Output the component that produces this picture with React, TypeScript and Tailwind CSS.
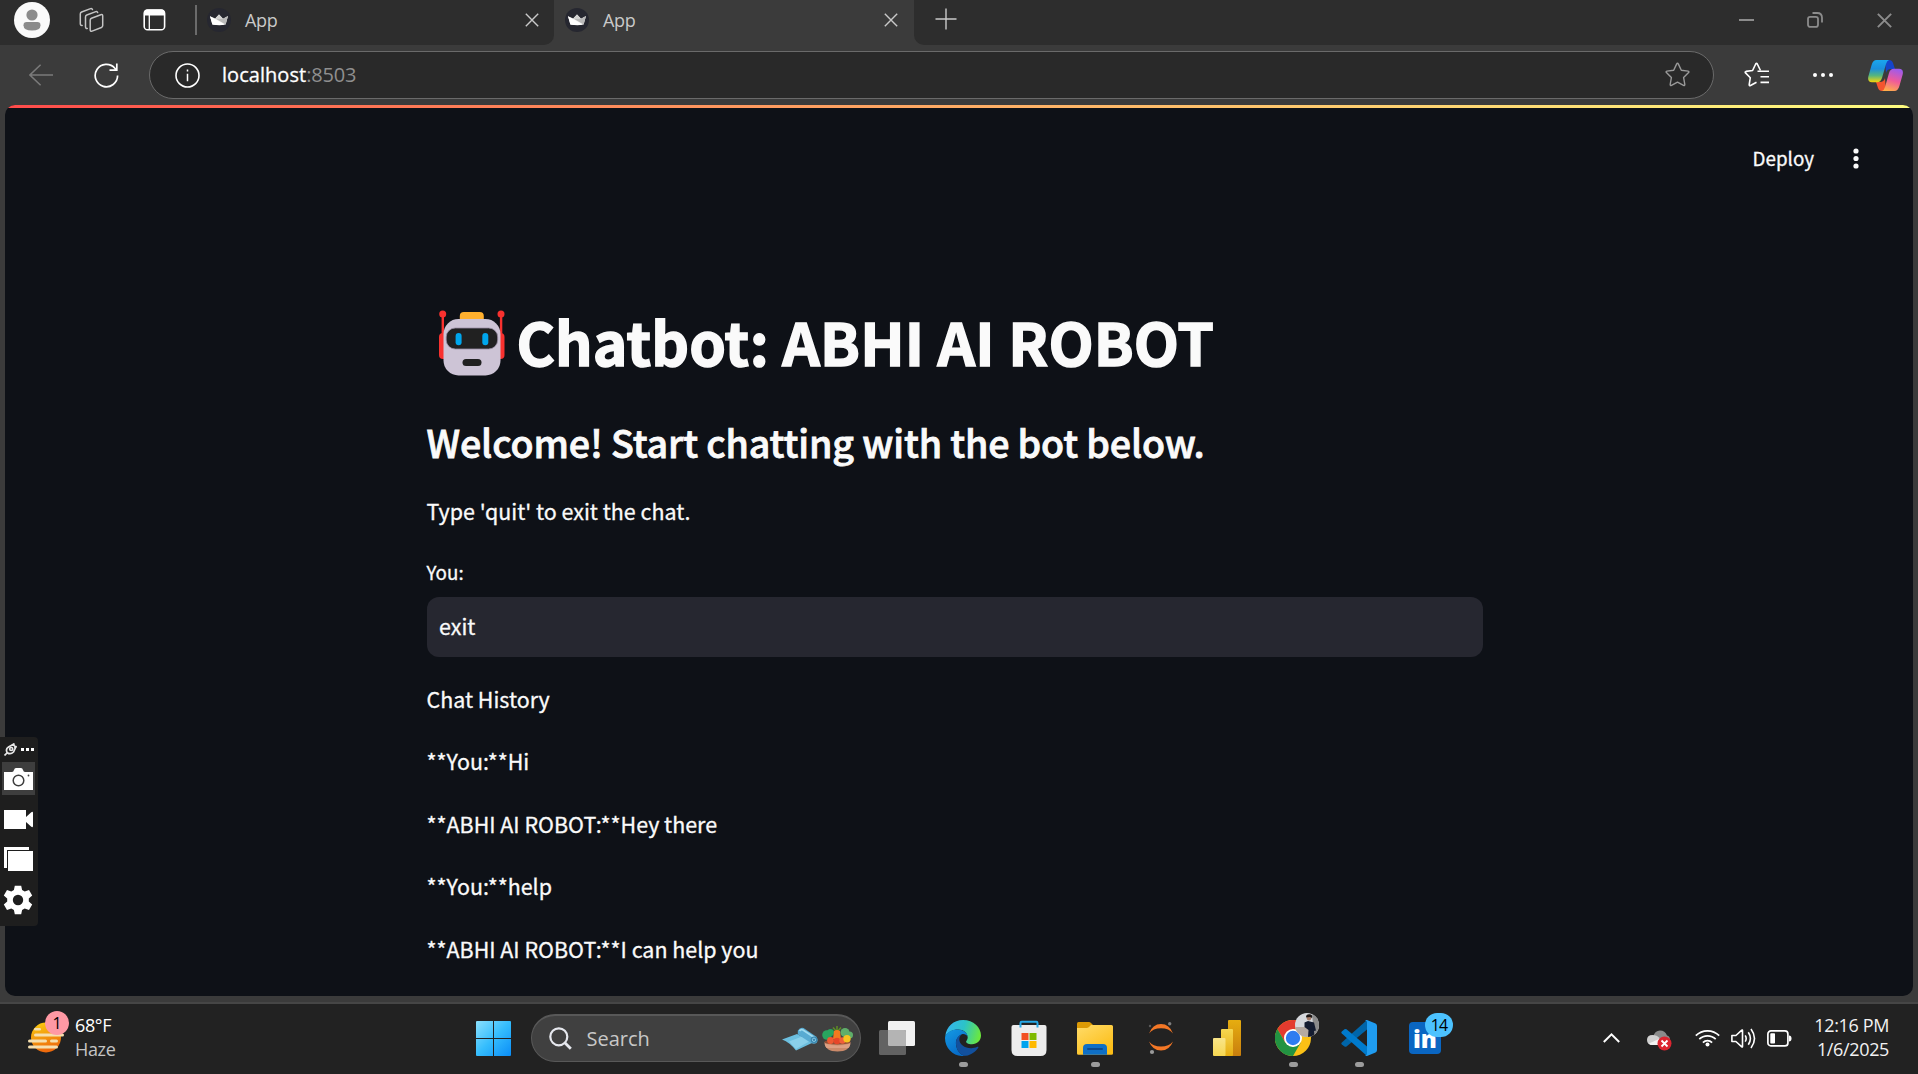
import React from "react";

const source = "font-['Noto_Sans_CJK_SC',sans-serif]";

function Crown() {
  return (
    <svg className="size-6 shrink-0" viewBox="0 0 24 24">
      <circle cx="12" cy="12" r="12" fill="#262730" />
      <path d="M3 8.2 L8.2 10.6 L12 6.6 L16 10.8 L21 8 L18.6 16.6 Q12 17.6 5.4 16.6 Z" fill="#f4f4f4" />
      <path d="M12 6.6 L16 10.8 L8.2 10.6 Z" fill="#d2d2d2" />
      <path d="M8.2 10.6 L16 10.8 L21 8 L18.6 16.6 Z" fill="#b9b9b9" />
      <path d="M3 8.2 L17.6 16.8 Q12 17.6 5.4 16.6 Z" fill="#fff" />
    </svg>
  );
}

function Cross({ className }: { className: string }) {
  return (
    <svg className={className} viewBox="0 0 14 14" fill="none" stroke="currentColor" strokeWidth="1.4">
      <path d="M.8.8 13.2 13.2M13.2.8.8 13.2" />
    </svg>
  );
}

function TabStrip() {
  return (
    <div className="flex h-[45px] bg-[#3b3b3b] text-lg leading-6 text-[#c9c9c9]">
      <div className="flex w-[554px] items-start rounded-br-[10px] bg-[#2d2d2d]">
        <svg className="mt-0.5 ml-3.5 size-9" viewBox="0 0 36 36">
          <circle cx="18" cy="18" r="18" fill="#fafafa" />
          <circle cx="18" cy="13" r="5.6" fill="#8b8b8b" />
          <path d="M9.5 23.2q0-3.2 3.2-3.2h10.6q3.2 0 3.2 3.2 0 5.3-8.5 5.3t-8.5-5.3Z" fill="#8b8b8b" />
        </svg>
        <svg className="mt-[7px] ml-[28px] h-[26px] w-[27px]" viewBox="0 0 27 26" fill="none" stroke="#c4c4c4" strokeWidth="1.5" strokeLinejoin="round">
          <path d="M12.2 13.2q0-1.4 1.3-2l9.3-3.5q1.9-.6 1.9 1.3v9.6q0 1.3-1.3 1.9l-9.3 3.6q-1.9.6-1.9-1.3Z" />
          <path d="M9.3 21.4q-1.8.2-1.8-1.6V10q0-1.4 1.3-2l9-3.4q1.5-.4 1.9 1" strokeLinecap="round" />
          <path d="M4.2 18.4q-1.9.2-1.9-1.6V7q0-1.4 1.3-2l9-3.4q1.5-.4 1.9 1" strokeLinecap="round" />
        </svg>
        <svg className="mt-[9px] ml-[38px] h-[22px] w-[23px]" viewBox="0 0 23 22">
          <rect x="1.2" y="1" width="20.4" height="19.8" rx="3.4" fill="none" stroke="#fff" strokeWidth="1.6" />
          <path d="M1 6.5V4q0-3.4 3.4-3.4h14Q21.8.6 21.800 4v2.5Z" fill="#fff" />
          <path d="M6.300 6v14.5" stroke="#fff" strokeWidth="1.300" />
        </svg>
        <div className="mt-[5px] ml-[29px] h-[30px] w-0.5 bg-[#6b6b6b]" />
        <div className="mt-2 ml-[10px] flex w-[332px] items-center">
          <Crown />
          <span className="-mt-px ml-3.5 flex-1 tracking-[-0.02em]">App</span>
          <Cross className="size-3.5" />
        </div>
      </div>
      <div className="flex w-[360px] items-start pt-2">
        <div className="ml-[11px] flex w-[333px] items-center">
          <Crown />
          <span className="-mt-px ml-3.5 flex-1 tracking-[-0.02em]">App</span>
          <Cross className="size-3.5" />
        </div>
      </div>
      <div className="flex flex-1 items-start rounded-bl-[10px] bg-[#2d2d2d] text-[#8c8c8c]">
        <svg className="mt-2 ml-[21px] size-[22px]" viewBox="0 0 22 22" stroke="#c9c9c9" strokeWidth="1.4">
          <path d="M11 .5v21M.5 11h21" />
        </svg>
        <div className="ml-auto flex w-[179px] items-center pt-3">
          <div className="h-0.5 w-[15px] bg-[#8c8c8c]" />
          <svg className="ml-[53px] size-4" viewBox="0 0 16 16" fill="none" stroke="currentColor" strokeWidth="1.8">
            <rect x="1" y="4.900" width="10" height="10" rx="2.200" />
            <path d="M5.500 1h4.700Q15 1 15 5.800V10.500" />
          </svg>
          <Cross className="ml-[54px] size-[15px] stroke-[1.8]" />
        </div>
      </div>
    </div>
  );
}

function Toolbar() {
  return (
    <div className="flex h-[60px] items-center bg-[#3b3b3b]">
      <svg className="ml-[29px] h-[22px] w-6" viewBox="0 0 24 22" fill="none" stroke="#7b7b7b" strokeWidth="1.5">
        <path d="M24 11H.8M11.600.8.9 11l10.700 10.200" />
      </svg>
      <svg className="ml-[41px] size-[25px]" viewBox="0 0 25 25" fill="none" stroke="#fff" strokeWidth="1.700">
        <path d="M23.600 12.500A11.200 11.200 0 1 1 20.900 5.300L22.500 7M22.800.6V7.100H15.500" />
      </svg>
      <div className="ml-[30px] flex h-12 w-[1565px] items-center rounded-full border-[1.5px] border-[#6a6a6a] bg-[#292929] text-xl">
        <svg className="ml-[25px] size-[25px]" viewBox="0 0 25 25" fill="none" stroke="#fff" strokeWidth="1.600">
          <circle cx="12.500" cy="12.500" r="11.500" />
          <path d="M12.500 10.800v7.400M12.500 6.600v2" strokeWidth="1.500" />
        </svg>
        <span className="ml-[22px] tracking-[0.002em] text-white [-webkit-text-stroke:0.3px_#fff]">localhost</span>
        <span className="tracking-[-0.01em] text-[#8f8f8f]">:8503</span>
        <svg className="mr-[23px] mb-px ml-auto size-[25px]" viewBox="0 0 25 25" fill="none" stroke="#9a9a9a" strokeWidth="1.400" strokeLinejoin="round">
          <path d="M12.500 1.200q.5 0 .8.700l3 6.300 6.800.9q1.400.4.500 1.500l-5 4.900 1.200 6.900q.1 1.400-1.300.900l-6-3.200-6 3.200q-1.400.5-1.300-.9l1.200-6.900-5-4.900q-.9-1.100.5-1.500l6.800-.9 3-6.300q.3-.7.800-.7Z" />
        </svg>
      </div>
      <svg className="ml-[30px] size-[26px]" viewBox="0 0 26 26" fill="none" stroke="#fff" strokeWidth="1.600" strokeLinejoin="round">
        <path d="M16.500 8.500 13.300 2q-.8-1.300-1.600 0L8.600 8.500l-6.600.9q-1.400.4-.5 1.500l4.800 4.800-1.100 6.900q-.1 1.400 1.300.9l6-3.200" />
        <path d="M13.500 9.200H25M16.500 14.800H25M16.500 20.400H25" />
      </svg>
      <svg className="ml-[42px] h-2 w-[22px]" viewBox="0 0 22 8" fill="#fff">
        <circle cx="3" cy="4" r="2" />
        <circle cx="11" cy="4" r="2" />
        <circle cx="19" cy="4" r="2" />
      </svg>
      <svg className="ml-[34px] h-[31px] w-[35px]" viewBox="0 0 35 31">
        <defs>
          <linearGradient id="cpA" x1="0" y1="0" x2="0" y2="1">
            <stop offset="0" stopColor="#1aa7ee" />
            <stop offset=".4" stopColor="#1b8fdd" />
            <stop offset=".7" stopColor="#55b57f" />
            <stop offset="1" stopColor="#f5d60a" />
          </linearGradient>
          <linearGradient id="cpB" x1="0.600" y1="0" x2="0.300" y2="1">
            <stop offset="0" stopColor="#a05bea" />
            <stop offset=".5" stopColor="#ef5a9b" />
            <stop offset="1" stopColor="#ffae4a" />
          </linearGradient>
        </defs>
        <path d="M17 0h4q3 0 4 3l2 6h-4q-4 0-5 4Z" fill="#1544c9" />
        <path d="M18 31h-4q-3 0-4-3l-2-6h4q4 0 5-4Z" fill="#f4552f" />
        <path d="M8.500 0H21q-2 .6-3 4l-4 14q-1.300 4.200-5 4.200H4q-5 0-3.600-6L3.600 5Q5 0 8.500 0Z" fill="url(#cpA)" />
        <path d="M26.500 31H14q2-.6 3-4l4-14q1.300-4.200 5-4.200h5q5 0 3.600 6L31.400 26Q30 31 26.500 31Z" fill="url(#cpB)" />
      </svg>
    </div>
  );
}

function Robot() {
  return (
    <svg className="mt-1 ml-3 size-[66px] shrink-0" viewBox="0 0 66 66">
      <g fill="#F8312F">
        <circle cx="3.700" cy="3.900" r="3.500" />
        <circle cx="62" cy="3.900" r="3.500" />
        <rect x="2.600" y="4" width="2.400" height="24" />
        <rect x="60.900" y="4" width="2.400" height="24" />
        <rect x="0" y="23" width="12" height="26" rx="4" />
        <rect x="53.500" y="23" width="12" height="26" rx="4" />
      </g>
      <rect x="20.800" y="2" width="24" height="12" rx="4" fill="#FFB02E" />
      <rect x="4.500" y="9" width="57" height="56.500" rx="15" fill="#CDC4D6" />
      <rect x="7.200" y="18" width="51.500" height="21" rx="9" fill="#212121" stroke="#998EA4" strokeWidth=".8" />
      <rect x="16.600" y="23" width="6" height="12.300" rx="3" fill="#00A6ED" />
      <rect x="43.300" y="23" width="6" height="12.300" rx="3" fill="#00A6ED" />
      <rect x="23.500" y="49" width="19" height="7" rx="3.500" fill="#212121" />
    </svg>
  );
}

const messages = ["Chat History", "**You:**Hi", "**ABHI AI ROBOT:**Hey there", "**You:**help", "**ABHI AI ROBOT:**I can help you"];

function Page() {
  return (
    <main className={`mx-[5px] flex h-[891px] flex-col overflow-hidden rounded-[10px] bg-[#0e1117] text-[#fafafa] ${source}`}>
      <div className="h-[3px] shrink-0 bg-linear-to-r from-[#ff4b4b] to-[#fffd80]" />
      <header className="flex h-[101px] shrink-0 items-center justify-end pr-[54px]">
        <span className="-mt-0.5 text-[18.8px] leading-7 [-webkit-text-stroke:0.3px_#fafafa]">Deploy</span>
        <svg className="ml-[39px] h-[21px] w-1.5" viewBox="0 0 6 21" fill="currentColor">
          <circle cx="3" cy="3" r="2.600" />
          <circle cx="3" cy="10.500" r="2.600" />
          <circle cx="3" cy="18" r="2.600" />
        </svg>
      </header>
      <div className="ml-[421.5px] flex w-[1056px] flex-col pt-[97px] text-[21.45px] leading-[38.5px] [-webkit-text-stroke:0.3px_#fafafa]">
        <h1 className="flex h-[70px] items-start text-[58.7px] leading-[70px] font-bold tracking-[0.12px] [-webkit-text-stroke:1.5px_#fafafa]">
          <Robot />
          <span className="ml-3 whitespace-nowrap">Chatbot: ABHI AI ROBOT</span>
        </h1>
        <h2 className="mt-[38px] text-[37.6px] leading-[56px] font-medium tracking-[-0.0035em] whitespace-nowrap [-webkit-text-stroke:0.8px_#fafafa]">
          Welcome! Start chatting with the bot below.
        </h2>
        <p className="mt-[22px]">Type 'quit' to exit the chat.</p>
        <label className="mt-[26.5px] text-[18.8px] leading-[30px]">You:</label>
        <div className="mt-[9.5px] h-[60px] rounded-xl bg-[#262730] pl-[12.5px] leading-[58px]">exit</div>
        <div className="mt-[23px] flex flex-col gap-6">
          {messages.map((m) => (
            <p key={m}>{m}</p>
          ))}
        </div>
      </div>
    </main>
  );
}

function CaptureWidget() {
  return (
    <aside className="absolute top-[737px] left-0 flex h-[189px] w-[38px] flex-col rounded-r bg-[#1e1e1e] pl-0.5">
      <div className="flex h-[25px] items-center gap-1 pl-0.5">
        <svg className="size-[13px]" viewBox="0 0 13 13" fill="none" stroke="#e8e8e8" strokeWidth="1.700">
          <path d="M.5 12.500 3.500 9.500" />
          <path d="M3.200 9.700Q1.200 6 4.500 4L9 1.500l2.700 2.700L9.500 9Q6.500 12 3.200 9.700Z" />
          <circle cx="7.200" cy="6" r="1.500" />
          <path d="m8 2.500 2.500-2M10.500 5l2-2" />
        </svg>
        <svg className="h-[3px] w-[13px]" viewBox="0 0 13 3" fill="#fff">
          <path d="M0 0h3v3H0zM5 0h3v3H5zM10 0h3v3h-3z" />
        </svg>
      </div>
      <div className="flex h-[33px] w-[33px] items-center justify-center bg-[#3e3e3e]">
        <svg className="h-[22px] w-[29px]" viewBox="0 0 29 22">
          <path d="M0 4h8q1.500 0 2-2t2-2h5q1.500 0 2 2t2 2h8v18H0z" fill="#fff" />
          <circle cx="14.500" cy="12.500" r="5.300" fill="none" stroke="#3e3e3e" strokeWidth="1.500" />
          <circle cx="24.500" cy="7.500" r=".9" fill="#3e3e3e" />
        </svg>
      </div>
      <svg className="mt-[15px] ml-0.5 h-[19px] w-[29px]" viewBox="0 0 29 19" fill="#fff">
        <path d="M0 0h22v7l5-4.500q2-1.500 2 .5v13q0 2-2 .5L22 12v7H0z" />
      </svg>
      <svg className="mt-[18px] ml-0.5 h-6 w-[29px]" viewBox="0 0 29 24" fill="#fff">
        <path d="M0 0h25v3H3v18H0z" />
        <path d="M4 4h25v20H4z" />
      </svg>
      <svg className="mt-3.5 ml-px size-[30px]" viewBox="0 0 30 30">
        <path
          d="M11.800.7h6.400l.9 4.400 2.600 1.500 4.300-1.500 3.200 5.500-3.400 2.900v3l3.400 2.900-3.200 5.500-4.300-1.500-2.600 1.500-.9 4.400h-6.400l-.9-4.400-2.600-1.500L4 24.900.8 19.400l3.400-2.900v-3L.8 10.600 4 5.100l4.300 1.500 2.600-1.500Z"
          fill="#fff"
        />
        <circle cx="15" cy="15" r="5.200" fill="#1e1e1e" />
      </svg>
    </aside>
  );
}

function Cell({ children, running }: { children: React.ReactNode; running?: boolean }) {
  return (
    <div className="relative flex w-[66px] shrink-0 justify-center pt-[15.5px]">
      {children}
      {running && <div className="absolute bottom-[7px] left-[28.500px] h-[5px] w-[9px] rounded-full bg-[#9c9c9c]" />}
    </div>
  );
}

function TaskApps() {
  return (
    <div className="flex self-stretch">
      <Cell>
        <svg className="size-9" viewBox="0 0 36 36">
          <rect x="9" y="1" width="27" height="25" rx="1.500" fill="#f1f1f1" />
          <rect x="0" y="10" width="27" height="25" rx="1.500" fill="#626262" />
          <path d="M9 10h16.500q1.500 0 1.500 1.500V26H10.500Q9 26 9 24.500Z" fill="#b4b4b4" />
        </svg>
      </Cell>
      <Cell running>
        <svg className="size-9" viewBox="0 0 36 36">
          <defs>
            <linearGradient id="edA" x1="0" y1=".3" x2="1" y2=".5">
              <stop offset="0" stopColor="#36b4f0" />
              <stop offset=".5" stopColor="#2cc3c8" />
              <stop offset="1" stopColor="#6be83d" />
            </linearGradient>
            <linearGradient id="edB" x1="0" y1="0" x2=".6" y2="1">
              <stop offset="0" stopColor="#149ae4" />
              <stop offset="1" stopColor="#0669c6" />
            </linearGradient>
          </defs>
          <path d="M.3 16C1.500 6.500 8.500 0 18 0c10.500 0 18 7.500 18 15.500 0 5-4 8.700-9 8.700-4 0-6.500-1.500-5.800-3 1-1.200 1.500-2.400 1.500-3.900 0-4.300-4.300-7.800-9.700-7.800C7.500 9.500 3.300 12 .3 16Z" fill="url(#edA)" />
          <path d="M.3 16C3 11 8 9.500 12.500 9.500c5.500 0 9.500 3 10.200 7-1.300-2-3.700-2.900-5.700-2.300-3.500 1.500-6.500 5-6 10 .5 6 4.500 11 9.500 11.600C10 37.500 0 29.500 0 18Z" fill="url(#edB)" />
          <path d="M17 14.200c-4 1.600-6.500 5-6 10C11.500 30.500 16 36 21 35.700c5-.7 9.300-3.700 12.300-8 .4-.8-.3-1.300-1-.9-2 1-4 1.400-6 1.400-7 0-12-4.200-12-9 0-2 1-4 2.700-5Z" fill="#12509d" />
        </svg>
      </Cell>
      <Cell>
        <svg className="size-9" viewBox="0 0 36 36">
          <path d="M9.500 7V3q0-1.200 1.200-1.200h14.600q1.200 0 1.200 1.200v4" fill="none" stroke="#26a9e8" strokeWidth="2" />
          <path d="M.5 7q0-2 2-2h31q2 0 2 2v23q0 6-6 6h-23q-6 0-6-6Z" fill="#ededed" />
          <path d="M10.500 13h7v7h-7z" fill="#f25022" />
          <path d="M18.500 13h7v7h-7z" fill="#7fba00" />
          <path d="M10.500 21h7v7h-7z" fill="#00a4ef" />
          <path d="M18.500 21h7v7h-7z" fill="#ffb900" />
          <path d="M9.500 5v2.500M26.500 5v2.500" stroke="#26a9e8" strokeWidth="2" />
        </svg>
      </Cell>
      <Cell running>
        <svg className="size-9" viewBox="0 0 36 36">
          <defs>
            <linearGradient id="foA" x1="0" y1="0" x2=".7" y2="1">
              <stop offset="0" stopColor="#ffdc6a" />
              <stop offset="1" stopColor="#fcbd16" />
            </linearGradient>
          </defs>
          <path d="M0 3.500Q0 2 1.500 2H12q1 0 2 1l2.500 2.500V12H0z" fill="#dc9a05" />
          <path d="M0 8h9.500q1.500 0 2.500-1l2-2h20.500Q36 5 36 6.500V33.500q0 1.200-1.500 1.200h-33Q0 34.700 0 33.500Z" fill="url(#foA)" />
          <path d="M6 34.700V28q0-4 4-4h16q4 0 4 4v6.700Z" fill="#0f6fc5" />
          <path d="M11 29h14" stroke="#0b4a8f" strokeWidth="2" strokeLinecap="round" />
        </svg>
      </Cell>
      <Cell>
        <svg className="size-9" viewBox="0 0 36 36">
          <path d="M6 13.500Q9.500 4 18 4t12 9.500Q26 8.300 18 8.300T6 13.500Z" fill="#f37726" />
          <path d="M6 21.500Q9.500 30.500 18 30.500t12-9Q26 26.500 18 26.500T6 21.500Z" fill="#f37726" />
          <circle cx="26.700" cy="3.700" r="1.700" fill="#7d7d7d" />
          <circle cx="9" cy="32" r="2.100" fill="#9a9a9a" />
          <circle cx="7" cy="6" r="1.200" fill="#5c5c5c" />
        </svg>
      </Cell>
      <Cell>
        <svg className="size-9" viewBox="0 0 36 36">
          <defs>
            <linearGradient id="pbA" x1="0" y1="0" x2="0" y2="1">
              <stop offset="0" stopColor="#e6ad10" />
              <stop offset="1" stopColor="#c87e0e" />
            </linearGradient>
            <linearGradient id="pbB" x1="0" y1="0" x2="0" y2="1">
              <stop offset="0" stopColor="#f6d751" />
              <stop offset="1" stopColor="#e6ad10" />
            </linearGradient>
            <linearGradient id="pbC" x1="0" y1="0" x2="0" y2="1">
              <stop offset="0" stopColor="#f9e589" />
              <stop offset="1" stopColor="#f6d751" />
            </linearGradient>
          </defs>
          <rect x="19" y="0" width="13" height="36" rx="1" fill="url(#pbA)" />
          <rect x="12" y="9" width="12" height="27" rx="1" fill="url(#pbB)" />
          <rect x="4" y="18" width="12.500" height="18" rx="1" fill="url(#pbC)" />
        </svg>
      </Cell>
      <Cell running>
        <svg className="size-9" viewBox="0 0 36 36">
          <circle cx="18" cy="18" r="18" fill="#fbc116" />
          <path d="M2.400 9A18 18 0 0 1 33.600 9H18L10.200 22.500Z" fill="#e33b2e" />
          <path d="M2.400 9 10.200 22.500 18 27 25.800 22.500 18 36A18 18 0 0 1 2.400 9Z" fill="#229342" />
          <circle cx="18" cy="18" r="9" fill="#fff" />
          <circle cx="18" cy="18" r="7.200" fill="#2e7cf0" />
        </svg>
        <svg className="absolute top-[9px] left-[35px] size-6" viewBox="0 0 24 24">
          <defs>
            <clipPath id="avatarClip">
              <circle cx="12" cy="12" r="12" />
            </clipPath>
          </defs>
          <g clipPath="url(#avatarClip)">
            <rect width="24" height="24" fill="#d5d8dc" />
            <path d="M0 14h24v10H0z" fill="#b5aaa2" />
            <path d="M17 0h7v24h-5z" fill="#8b8b8b" />
            <path d="M9.500 9.500 13 8l6 1.500 2 8-2 .5.500 6H13l.5-7-4-3Z" fill="#141c30" />
            <circle cx="14" cy="5.300" r="2.200" fill="#a37a66" />
            <path d="M11 4.500Q11 1 14.500 1.300T17 5l-2-1Z" fill="#1d1715" />
          </g>
        </svg>
      </Cell>
      <Cell running>
        <svg className="size-9" viewBox="0 0 36 36">
          <path d="M.8 22.500 26 0v9.500L5.500 26.500q-1 .7-2 0L.8 24.500q-1-1 0-2Z" fill="#0065a9" />
          <path d="M.8 13.500q-1-1 0-2L3.500 9.300q1-.6 2 0L26 26.500V36Z" fill="#007acc" />
          <path d="M26 0 34.500 3.500Q36 4.200 36 6v24q0 1.800-1.500 2.500L26 36q-1.500.3-2-.5 2 .5 2-2v-31q0-2.500-2-2 .5-.8 2-.5Z" fill="#1f9cf0" />
        </svg>
      </Cell>
      <Cell>
        <div className="mt-0.5 flex size-8 items-center justify-center rounded bg-[#0a66c2] pt-0.5 text-2xl leading-8 font-extrabold text-white">in</div>
        <span className="absolute top-[9px] left-[33px] flex h-6 w-7 items-center justify-center rounded-full bg-[#4cc2ff] text-base leading-6 tracking-[-0.05em] text-black">14</span>
      </Cell>
    </div>
  );
}

function Taskbar() {
  return (
    <footer className="flex h-[70px] items-center bg-[#222222] text-lg leading-6 text-[#f2f2f2]">
      <div className="relative ml-7 h-12 w-10">
        <svg className="h-12 w-10" viewBox="0 0 40 48">
          <defs>
            <linearGradient id="sun" x1="0" y1="0" x2=".3" y2="1">
              <stop offset="0" stopColor="#fbd10f" />
              <stop offset="1" stopColor="#ee6a0c" />
            </linearGradient>
          </defs>
          <circle cx="18" cy="22.500" r="15" fill="url(#sun)" />
          <g fill="#f6dfae">
            <rect x="6" y="13" width="7" height="2.600" rx="1.300" />
            <rect x="6" y="18.500" width="30" height="3" rx="1.500" />
            <rect x="0" y="24.500" width="19" height="3" rx="1.500" />
            <rect x="22" y="24.500" width="8" height="3" rx="1.500" />
            <rect x="0" y="30.500" width="30" height="3" rx="1.500" />
          </g>
        </svg>
        <span className="absolute -top-[4px] left-[17px] flex size-6 items-center justify-center rounded-full bg-[#ff99a4] text-base leading-6 text-black">1</span>
      </div>
      <div className="ml-[7px] w-[401px] pb-1 tracking-[-0.02em]">
        <div className="text-white">68°F</div>
        <div className="text-[#c4c4c4]">Haze</div>
      </div>
      <svg className="mb-px size-[35px]" viewBox="0 0 35 35">
        <defs>
          <linearGradient id="win" x1="0" y1="0" x2="35" y2="35" gradientUnits="userSpaceOnUse">
            <stop offset="0" stopColor="#8be0fd" />
            <stop offset=".5" stopColor="#35bdfd" />
            <stop offset="1" stopColor="#0a8df7" />
          </linearGradient>
        </defs>
        <path d="M1 0h16v17H0V1q0-1 1-1ZM18 0h16q1 0 1 1v16H18zM0 18h17v17H1q-1 0-1-1ZM18 18h17v16q0 1-1 1H18z" fill="url(#win)" />
      </svg>
      <div className="mb-0.5 ml-5 flex h-12 w-[330px] items-center rounded-full border border-t-2 border-[#585858] bg-[#404040] text-xl text-[#c8c8c8]">
        <svg className="ml-[17px] size-[23px]" viewBox="0 0 23 23" fill="none" stroke="#e6e8ee" strokeWidth="2.200">
          <circle cx="9.800" cy="9.800" r="8.500" />
          <path d="m15.800 15.800 6 6" strokeWidth="2.800" />
        </svg>
        <span className="ml-[14.500px] flex-1">Search</span>
        <svg className="h-6 w-9" viewBox="0 0 36 24">
          <path d="M0 12.500 15 7 31 15.500 14 23.500Q8 15.500 0 12.500Z" fill="#6cbfdf" />
          <path d="M7 14.500 20 9.500l8 4.500-14 8Z" fill="#8ad0ea" />
          <path d="M16 3.500Q18 0 21.500 1L34 9.500Q37 12.500 34.500 16q-2.500 1.500-5.500 0L16 7.500Q15.500 5.500 16 3.500Z" fill="#58abd2" />
          <path d="M17.500 4Q19 2 21 3l12 8" stroke="#9fdbf0" strokeWidth="1.800" fill="none" />
          <circle cx="32" cy="12.800" r="3.300" fill="#3a86ae" />
          <circle cx="32" cy="12.800" r="1.700" fill="none" stroke="#86c8e4" />
        </svg>
        <svg className="mr-[7px] ml-1 h-[26px] w-[31px]" viewBox="0 0 31 26">
          <g fill="#28a55f">
            <circle cx="5" cy="9" r="4.800" />
            <circle cx="8.500" cy="6.500" r="3.500" />
          </g>
          <g fill="#5fae6a">
            <circle cx="23" cy="6.500" r="4.500" />
            <circle cx="27.500" cy="9" r="3.500" />
          </g>
          <path d="M15 6V0M15 6l-4-4.500M15 6l4-4.500" stroke="#5f8f24" strokeWidth="1.500" />
          <path d="M12 5q3-2 6 0l1 8h-8Z" fill="#f27a1f" />
          <path d="M2.500 16Q3 25.500 15.500 25.500T28.500 16Z" fill="#cb8a6a" />
          <ellipse cx="15.500" cy="16" rx="13" ry="2.500" fill="#8f4e33" />
          <circle cx="8.500" cy="14.500" r="3.400" fill="#ee5a32" />
          <circle cx="15" cy="15" r="3.300" fill="#e64628" />
          <circle cx="20.500" cy="14.500" r="3.200" fill="#f0603a" />
          <circle cx="25" cy="12.800" r="3.700" fill="#f7c21f" />
          <path d="M2.500 17.500q13 4 26 0-.5 3-2 4.500h-22q-1.500-1.500-2-4.500Z" fill="#dda083" />
        </svg>
      </div>
      <div className="ml-[3px] self-stretch">
        <div className="flex h-full">
          <TaskApps />
        </div>
      </div>
      <div className="ml-auto flex items-center pr-[29px] tracking-[-0.02em]">
        <svg className="mb-0.5 h-3 w-[17px]" viewBox="0 0 17 12" fill="none" stroke="#fff" strokeWidth="2">
          <path d="m.8 10 7.700-7.700L16.200 10" />
        </svg>
        <svg className="mt-[3px] ml-[27px] h-[21px] w-[25px]" viewBox="0 0 25 21">
          <path d="M6 6.500Q8 .5 13 .5t7 5q3 .5 3 4.500-1 4-5 4H8Z" fill="#8b8b8b" />
          <path d="M5.500 15Q0 15 0 10t5.500-5q4.500 0 7 3l3 7Z" fill="#d0d0d0" />
          <path d="M2 13.500 12 9l3 6H5Q3 15 2 13.500Z" fill="#f3f3f3" />
          <circle cx="17.500" cy="13.500" r="7" fill="#dc2530" />
          <path d="m14.500 10.500 6 6m0-6-6 6" stroke="#fff" strokeWidth="1.800" />
        </svg>
        <svg className="mb-0.5 ml-[23px] h-[18px] w-[25px]" viewBox="0 0 25 18" fill="none" stroke="#fff" strokeWidth="1.700">
          <path d="M.8 6.700a16.500 16.500 0 0 1 23.400 0M4.300 10.200a11.600 11.600 0 0 1 16.400 0M7.900 13.600a6.500 6.500 0 0 1 9.200 0" />
          <circle cx="12.500" cy="15.500" r="2" fill="#fff" stroke="none" />
        </svg>
        <svg className="mb-0.5 ml-[11px] h-[21px] w-[25px]" viewBox="0 0 25 21" fill="none" stroke="#fff" strokeWidth="1.600">
          <path d="M.9 7.500h4L10.800 2.200q.7-.5.700.4v15.800q0 .9-.7.400L4.900 13.500h-4Z" strokeLinejoin="round" />
          <path d="M14.200 7.300q2 3.200 0 6.400M17.300 4.300q4.200 6.200 0 12.400M20 1q7 9.500 0 19" />
        </svg>
        <svg className="mb-0.5 ml-[11px] h-[17px] w-[25px]" viewBox="0 0 25 17">
          <rect x=".9" y=".9" width="20" height="15" rx="3" fill="none" stroke="#fff" strokeWidth="1.700" />
          <rect x="3.300" y="3.300" width="4.700" height="10.200" rx=".8" fill="#fff" />
          <path d="M22 5.500q2.500 0 2.500 3t-2.500 3Z" fill="#fff" />
        </svg>
        <div className="ml-[17px] w-20 pb-1 text-right">
          <div>12:16 PM</div>
          <div>1/6/2025</div>
        </div>
      </div>
    </footer>
  );
}

export default function App() {
  return (
    <div className="relative flex h-[1074px] w-[1918px] flex-col overflow-hidden bg-[#3b3b3b] font-['Open_Sans','Noto_Sans',sans-serif]">
      <TabStrip />
      <Toolbar />
      <Page />
      <div className="h-2 border-b-2 border-[#464646]" />
      <Taskbar />
      <CaptureWidget />
    </div>
  );
}
